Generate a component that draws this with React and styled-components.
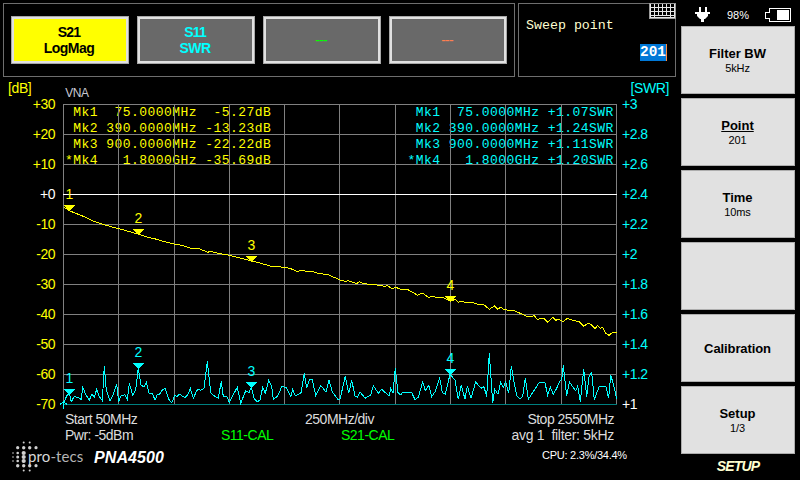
import React from 'react'
import styled, { createGlobalStyle } from 'styled-components';

const YELLOW = '#ffff00'
const CYAN = '#00ffff'

const traces = [
	{ label: 'S21', format: 'LogMag', color: '#000', active: true },
	{ label: 'S11', format: 'SWR', color: CYAN },
	{ label: '---', color: '#00ff00' },
	{ label: '---', color: '#ff7f50' },
]

const softKeys = [
	{ title: 'Filter BW', value: '5kHz' },
	{ title: 'Point', value: '201', selected: true },
	{ title: 'Time', value: '10ms' },
	{},
	{ title: 'Calibration' },
	{ title: 'Setup', value: '1/3' },
]

const dbScale = ['+30', '+20', '+10', '+0', '-10', '-20', '-30', '-40', '-50', '-60', '-70']
const swrScale = ['+3', '+2.8', '+2.6', '+2.4', '+2.2', '+2', '+1.8', '+1.6', '+1.4', '+1.2', '+1']

const dbReadout = [
	' Mk1  75.0000MHz  -5.27dB',
	' Mk2 390.0000MHz -13.23dB',
	' Mk3 900.0000MHz -22.22dB',
	'*Mk4   1.8000GHz -35.69dB',
]

const swrReadout = [
	' Mk1  75.0000MHz +1.07SWR',
	' Mk2 390.0000MHz +1.24SWR',
	' Mk3 900.0000MHz +1.11SWR',
	'*Mk4   1.8000GHz +1.20SWR',
]

const gridX = [0, 55, 111, 166, 221, 276, 332, 387, 442, 498, 553]
const gridY = [0, 30, 60, 90, 120, 150, 180, 210, 240, 270, 300]

// Every sweep block has its own origin, samples are in thirds of a pixel
const dbSweep = [
	{
		x: -3, y: 81, samples: [
			[11, 66], [30, 78], [60, 90], [82, 99], [100, 108], [133, 119], [160, 127], [180, 132], [237, 148], [265, 157],
			[290, 163], [320, 172], [345, 178], [365, 181], [390, 189], [420, 192], [443, 202], [451, 199], [480, 206],
			[508, 211], [540, 219], [575, 228], [600, 234], [630, 243], [655, 245], [690, 250], [710, 259], [725, 257],
			[760, 260], [775, 265], [805, 269], [822, 277],
		],
	},
	{
		x: 272, y: 136, samples: [
			[0, 112], [12, 119], [30, 124], [40, 122], [65, 131], [73, 125], [85, 131], [120, 134], [150, 139], [158, 137],
			[170, 146], [182, 142], [195, 147], [215, 147], [235, 158], [248, 166], [256, 161], [265, 161], [282, 173],
			[290, 169], [305, 172], [325, 173], [335, 178], [347, 184], [360, 178], [370, 187], [380, 184], [390, 187],
			[410, 187], [430, 193], [448, 195], [463, 208], [478, 198], [488, 208], [497, 202], [505, 207], [515, 210],
			[540, 213], [575, 229], [590, 230], [597, 226], [607, 239], [615, 236], [628, 236], [638, 247], [653, 232],
			[662, 241], [670, 238], [685, 245], [697, 235], [710, 240], [733, 245], [746, 259], [760, 249], [768, 253],
			[780, 266], [788, 256], [795, 265], [803, 262], [812, 280], [822, 286], [832, 278], [845, 277],
		],
	},
]

const swrSweep = [
	{
		x: -63, y: 236, samples: [
			[190, 192], [200, 168], [208, 160], [214, 185], [223, 169], [240, 175], [243, 181], [248, 142], [258, 165],
			[268, 180], [276, 163], [283, 172], [290, 148], [297, 168], [307, 182], [313, 79], [319, 150], [330, 182],
			[340, 163], [350, 132], [356, 185], [362, 168], [375, 164], [382, 178], [388, 130], [398, 165], [407, 150],
			[415, 84], [423, 136], [432, 140], [439, 127], [448, 162], [457, 160], [465, 180], [472, 164], [477, 165],
			[485, 152], [495, 145], [506, 178], [515, 188], [525, 165], [530, 170], [538, 162], [545, 167], [555, 172],
			[563, 165], [571, 145], [580, 175], [590, 152], [597, 147],
		],
	},
	{
		x: 137, y: 236, samples: [
			[2, 151], [12, 145], [22, 64], [32, 158], [40, 166], [55, 175], [64, 124], [70, 170], [80, 168], [88, 188],
			[95, 172], [112, 142], [122, 190], [137, 152], [147, 158], [154, 142], [162, 175], [172, 185], [180, 180],
			[188, 142], [196, 160], [206, 120], [215, 140], [220, 178], [233, 168], [245, 140], [258, 142], [272, 170],
			[278, 148], [286, 168], [303, 158], [313, 99], [320, 145], [328, 120], [337, 118], [347, 167], [362, 136],
			[378, 156], [387, 120], [397, 155], [413, 178], [420, 178], [436, 108], [446, 160], [455, 121], [465, 168],
			[472, 172], [480, 155], [495, 175], [512, 165], [520, 137], [535, 160], [545, 148], [567, 168], [572, 146],
			[579, 160], [586, 84], [594, 158], [602, 165], [607, 157],
		],
	},
	{
		x: 347, y: 236, samples: [
			[0, 157], [5, 158], [15, 179], [25, 172], [38, 126], [46, 152], [56, 136], [65, 170], [75, 155], [89, 114],
			[97, 158], [106, 163], [120, 103], [135, 120], [145, 178], [154, 135], [165, 178], [172, 138], [183, 175],
			[197, 126], [213, 145], [222, 140], [230, 170], [238, 40], [248, 188], [254, 148], [264, 163], [272, 126],
			[280, 142], [287, 125], [296, 160], [304, 79], [313, 130], [320, 168], [330, 176], [338, 170], [346, 114],
			[355, 178], [370, 155], [388, 127], [405, 128], [413, 166], [421, 142], [430, 163], [440, 145], [450, 122],
			[455, 118], [460, 76], [470, 168], [478, 126], [497, 152], [503, 138], [511, 185], [521, 88], [530, 170],
			[537, 110], [545, 97], [553, 180], [568, 138], [587, 138], [596, 175], [602, 104], [612, 140], [620, 177],
		],
	},
]

const toPoints = (blocks) => blocks
	.flatMap(({ x, y, samples }) => samples.map(([sx, sy]) => `${(x + sx / 3).toFixed(1)},${(y + sy / 3).toFixed(1)}`))
	.join(' ')

const dbMarkers = [[6, 101], [75, 125], [188, 152], [387, 192]]
const swrMarkers = [[6, 285], [75, 259], [188, 278], [387, 265]]

const Markers = ({ points, color }) => points.map(([x, y], index) => (
	<g key={index} fill={color}>
		<path d={`M${x - 5.5} ${y}h12l-6 6z`} shapeRendering="crispEdges" />
		<MarkerLabel x={x + 0.5} y={y - 6}>{index + 1}</MarkerLabel>
	</g>
))

const Chart = () => (
	<Plot width="554" height="301" viewBox="0 0 554 301">
		<g stroke="#808080" shapeRendering="crispEdges">
			{gridX.map((x) => <line key={x} x1={x + 0.5} x2={x + 0.5} y1="0" y2="301" />)}
			{gridY.map((y) => <line key={y} x1="0" x2="554" y1={y + 0.5} y2={y + 0.5} />)}
			<line x1="0" x2="554" y1="90.5" y2="90.5" stroke="#fff" />
			<line x1="0" x2="554" y1="300.5" y2="300.5" stroke="#008080" />
		</g>
		<g fill="none" shapeRendering="crispEdges">
			<polyline points={toPoints(dbSweep)} stroke={YELLOW} />
			<polyline points={toPoints(swrSweep)} stroke={CYAN} />
			<path d="M-3 300.5L0.5 297.5L4 300.5M0.5 298V305" stroke={CYAN} />
		</g>
		<Markers points={dbMarkers} color={YELLOW} />
		<Markers points={swrMarkers} color={CYAN} />
	</Plot>
)

const KeyboardIcon = () => (
	<Keyboard width="27" height="16" viewBox="0 0 27 16" shapeRendering="crispEdges">
		<rect width="27" height="16" fill="#9a9a9a" />
		<rect x="1" y="1" width="25" height="14" fill="#e6e6e6" />
		{[1, 5, 9].map((y) => [2, 6, 10, 14, 18, 22].map((x) => (
			<rect key={`${x}-${y}`} x={x} y={y} width="3" height="3" fill="#000" />
		)))}
		<rect x="2" y="13" width="3" height="1" fill="#000" />
		<rect x="6" y="13" width="15" height="1" fill="#000" />
		<rect x="22" y="13" width="3" height="1" fill="#000" />
	</Keyboard>
)

const PlugIcon = () => (
	<svg width="16" height="15" viewBox="0 0 16 15" fill="#fff">
		<path d="M4 0h2v5h4V0h2v5h3v2h-2v2l-3 3H9v3H6v-3H5L2 9V7H0V5h4z" />
	</svg>
)

const BatteryIcon = () => (
	<svg width="26" height="14" viewBox="0 0 26 14" shapeRendering="crispEdges">
		<path d="M4.5 0.5h21v13h-21v-3h-4v-6h4z" fill="none" stroke="#fff" />
		<rect x="12" y="2" width="12" height="10" fill="#fff" />
	</svg>
)

const logoX = [1, 5.7, 11.7, 17.7, 24]
const logoY = [1.5, 6.7, 12, 16, 20, 24.7, 29.5]

// [column, row, radius]
const logoDots = [
	[0, 2, 0.8], [0, 3, 0.8], [0, 4, 0.8],
	[1, 1, 1.6], [1, 2, 1.3], [1, 3, 1.5], [1, 4, 1.3], [1, 5, 1.7],
	[2, 0, 1], [2, 1, 1.7], [2, 2, 2.1], [2, 3, 2.1], [2, 4, 2.1], [2, 5, 1.7], [2, 6, 1],
	[3, 0, 1], [3, 1, 1.7], [3, 5, 1.7], [3, 6, 1],
	[4, 1, 1.6], [4, 5, 1.6],
]

const LogoMark = () => (
	<svg width="26" height="32" viewBox="0 0 26 32" fill="#d0d0d0">
		{logoDots.map(([col, row, r]) => (
			<circle key={`${col}-${row}`} cx={logoX[col]} cy={logoY[row]} r={r} />
		))}
	</svg>
)

const App = () => (
	<Screen>
		<GlobalStyle />
		<Main>
			<Header>
				<TracePanel>
					{traces.map((trace, index) => (
						<TraceButton key={index} $active={trace.active} $color={trace.color} $off={!trace.format}>
							<TraceName>{trace.label}</TraceName>
							{trace.format && <span>{trace.format}</span>}
						</TraceButton>
					))}
				</TracePanel>
				<EntryPanel>
					<KeyboardIcon />
					<EntryLabel>Sweep point</EntryLabel>
					<EntryValue>201</EntryValue>
				</EntryPanel>
			</Header>

			<Captions>
				<Unit $color={YELLOW}>[dB]</Unit>
				<Mode>VNA</Mode>
				<Unit $color={CYAN}>[SWR]</Unit>
			</Captions>

			<ChartRow>
				<Scale $color={YELLOW} $align="right">
					{dbScale.map((tick) => <Tick key={tick} $reference={tick === '+0'}>{tick}</Tick>)}
				</Scale>
				<PlotArea>
					<Readout $color={YELLOW} $left="2px">{dbReadout.join('\n')}</Readout>
					<Readout $color={CYAN} $left="344.5px">{swrReadout.join('\n')}</Readout>
					<Chart />
				</PlotArea>
				<Scale $color={CYAN}>
					{swrScale.map((tick) => <Tick key={tick} $reference={tick === '+1'}>{tick}</Tick>)}
				</Scale>
			</ChartRow>

			<SweepInfo>
				<span>Start 50MHz</span>
				<span>250MHz/div</span>
				<span>Stop 2550MHz</span>
			</SweepInfo>
			<StatusInfo>
				<span>Pwr: -5dBm</span>
				<CalStatus>S11-CAL</CalStatus>
				<CalStatus>S21-CAL</CalStatus>
				<Filter>{'avg 1  filter: 5kHz'}</Filter>
			</StatusInfo>

			<Footer>
				<LogoMark />
				<LogoText><b>pro</b>-tecs</LogoText>
				<Model>PNA4500</Model>
				<Cpu>CPU: 2.3%/34.4%</Cpu>
			</Footer>
		</Main>

		<Side>
			<PowerStatus>
				<PlugIcon />
				<span>98%</span>
				<BatteryIcon />
			</PowerStatus>
			<SoftKeys>
				{softKeys.map((item, index) => (
					<SoftKey key={index}>
						{item.title && <KeyTitle $selected={item.selected}>{item.title}</KeyTitle>}
						{item.value && <KeyValue>{item.value}</KeyValue>}
					</SoftKey>
				))}
			</SoftKeys>
			<MenuName>SETUP</MenuName>
		</Side>
	</Screen>
)

export default App

const GlobalStyle = createGlobalStyle`
	* {
		box-sizing: border-box;
	}
	body {
		margin: 0;
		background: #000;
	}
`

const Screen = styled.div`
	display: flex;
	width: 800px;
	height: 480px;
	overflow: hidden;
	background: #000;
	color: #dcdcdc;
	font: 14px/16px "Liberation Sans", Arial, sans-serif;
	letter-spacing: -0.5px;
`

const Main = styled.div`
	width: 681px;
`

const Header = styled.div`
	display: flex;
	gap: 3px;
	padding: 3px 0 0 3px;
`

const TracePanel = styled.div`
	display: flex;
	gap: 8px;
	width: 512px;
	height: 74px;
	padding: 12px 7px;
	border: 1px solid #6e6e6e;
`

const TraceButton = styled.button`
	display: flex;
	flex-direction: column;
	align-items: center;
	justify-content: center;
	width: 118px;
	height: 48px;
	padding: 0 2px 0 0;
	border: 1px solid #a8a8a8;
	box-shadow: inset 0 0 0 2px #e1e1e1;
	background: ${({ $active }) => ($active ? YELLOW : '#696969')};
	color: ${({ $color }) => $color};
	font: ${({ $off }) => ($off ? 'normal' : 'bold')} 14px/16px "Liberation Sans", Arial, sans-serif;
	letter-spacing: -0.5px;
`

const TraceName = styled.span`
	letter-spacing: -0.8px;
`

const EntryPanel = styled.div`
	position: relative;
	display: flex;
	flex-direction: column;
	align-items: flex-start;
	width: 158px;
	height: 74px;
	padding: 13px 8px 0 7px;
	border: 1px solid #6e6e6e;
	font-family: "Liberation Mono", "Courier New", monospace;
	letter-spacing: 0;
`

const Keyboard = styled.svg`
	position: absolute;
	top: -1px;
	right: -1px;
`

const EntryLabel = styled.div`
	padding-top: 1px;
	color: #ffffd0;
	font-size: 13.3px;
	line-height: 15px;
`

const EntryValue = styled.div`
	align-self: flex-end;
	margin-top: 11px;
	border-right: 1px solid #ff8c40;
	background: #0078d7;
	color: #fff;
	font-size: 14.4px;
	font-weight: bold;
	line-height: 17px;
`

const Captions = styled.div`
	display: flex;
	height: 27px;
	padding: 3px 12px 0 8px;
`

const Unit = styled.div`
	color: ${({ $color }) => $color};
	letter-spacing: -0.4px;
`

const Mode = styled.div`
	flex: 1;
	padding: 6px 0 0 34px;
	color: #c8c8d2;
	font-size: 12px;
	line-height: 14px;
`

const ChartRow = styled.div`
	display: flex;
	height: 301px;
`

const Scale = styled.div`
	width: ${({ $align }) => ($align ? '63px' : '60px')};
	margin-top: -8px;
	padding: ${({ $align }) => ($align ? '0 8px 0 0' : '0 0 0 5px')};
	color: ${({ $color }) => $color};
	text-align: ${({ $align }) => $align || 'left'};
`

const Tick = styled.div`
	height: 30px;
	${({ $reference }) => $reference && 'color: #fff;'}
`

const PlotArea = styled.div`
	position: relative;
	width: 554px;
	height: 301px;
`

const Plot = styled.svg`
	position: relative;
	display: block;
	overflow: visible;
`

const MarkerLabel = styled.text`
	font-size: 14px;
	letter-spacing: 0;
	text-anchor: middle;
`

const Readout = styled.pre`
	position: absolute;
	top: 1px;
	left: ${({ $left }) => $left};
	margin: 0;
	color: ${({ $color }) => $color};
	font: 13px/16px "Liberation Mono", "Courier New", monospace;
	letter-spacing: 0.45px;
`

const SweepInfo = styled.div`
	display: grid;
	grid-template-columns: 1fr auto 1fr;
	margin: 6px 67px 0 65px;

	span:last-child {
		text-align: right;
	}
`

const StatusInfo = styled.div`
	display: grid;
	grid-template-columns: 156px 120px 1fr auto;
	margin: 0 67px 0 65px;
	white-space: pre;
`

const CalStatus = styled.span`
	color: #00ff00;
`

const Filter = styled.span`
	letter-spacing: -0.3px;
`

const Footer = styled.div`
	display: flex;
	align-items: center;
	height: 28px;
	padding-left: 12px;
`

const LogoText = styled.div`
	width: 66px;
	margin: -3px 0 0 -10px;
	color: #b4b4b4;
	font: 15px/18px Lato, sans-serif;
	letter-spacing: 0.1px;

	b {
		color: #d8d8d8;
		font-weight: 400;
	}
`

const Model = styled.div`
	width: 448px;
	padding-top: 2px;
	color: #fff;
	font-size: 16px;
	font-style: italic;
	font-weight: bold;
	letter-spacing: 0.1px;
`

const Cpu = styled.div`
	margin-top: -4px;
	color: #fff;
	font-size: 11px;
	letter-spacing: -0.25px;
`

const Side = styled.div`
	width: 114px;
`

const PowerStatus = styled.div`
	display: flex;
	align-items: center;
	justify-content: space-between;
	height: 26px;
	padding: 3px 4px 0 14px;
	color: #fff;
	font-size: 11px;
	letter-spacing: 0;
`

const SoftKeys = styled.div`
	display: flex;
	flex-direction: column;
	gap: 4px;
`

const SoftKey = styled.button`
	display: flex;
	flex-direction: column;
	align-items: center;
	justify-content: center;
	height: 68px;
	padding: 0 1px 0 0;
	border: 1px solid #adadad;
	background: #e1e1e1;
	color: #000;
	font-family: "Liberation Sans", Arial, sans-serif;
	letter-spacing: 0;
`

const KeyTitle = styled.div`
	font-size: 13px;
	font-weight: bold;
	line-height: 16px;
	${({ $selected }) => $selected && 'text-decoration: underline;'}

	&:only-child {
		padding-top: 2px;
		letter-spacing: -0.1px;
	}
`

const KeyValue = styled.div`
	margin-top: -1px;
	font-size: 11px;
	line-height: 14px;
	letter-spacing: -0.1px;
`

const MenuName = styled.div`
	padding-top: 4px;
	color: #ffffd0;
	font-size: 14px;
	font-style: italic;
	font-weight: bold;
	letter-spacing: -0.8px;
	text-align: center;
`
